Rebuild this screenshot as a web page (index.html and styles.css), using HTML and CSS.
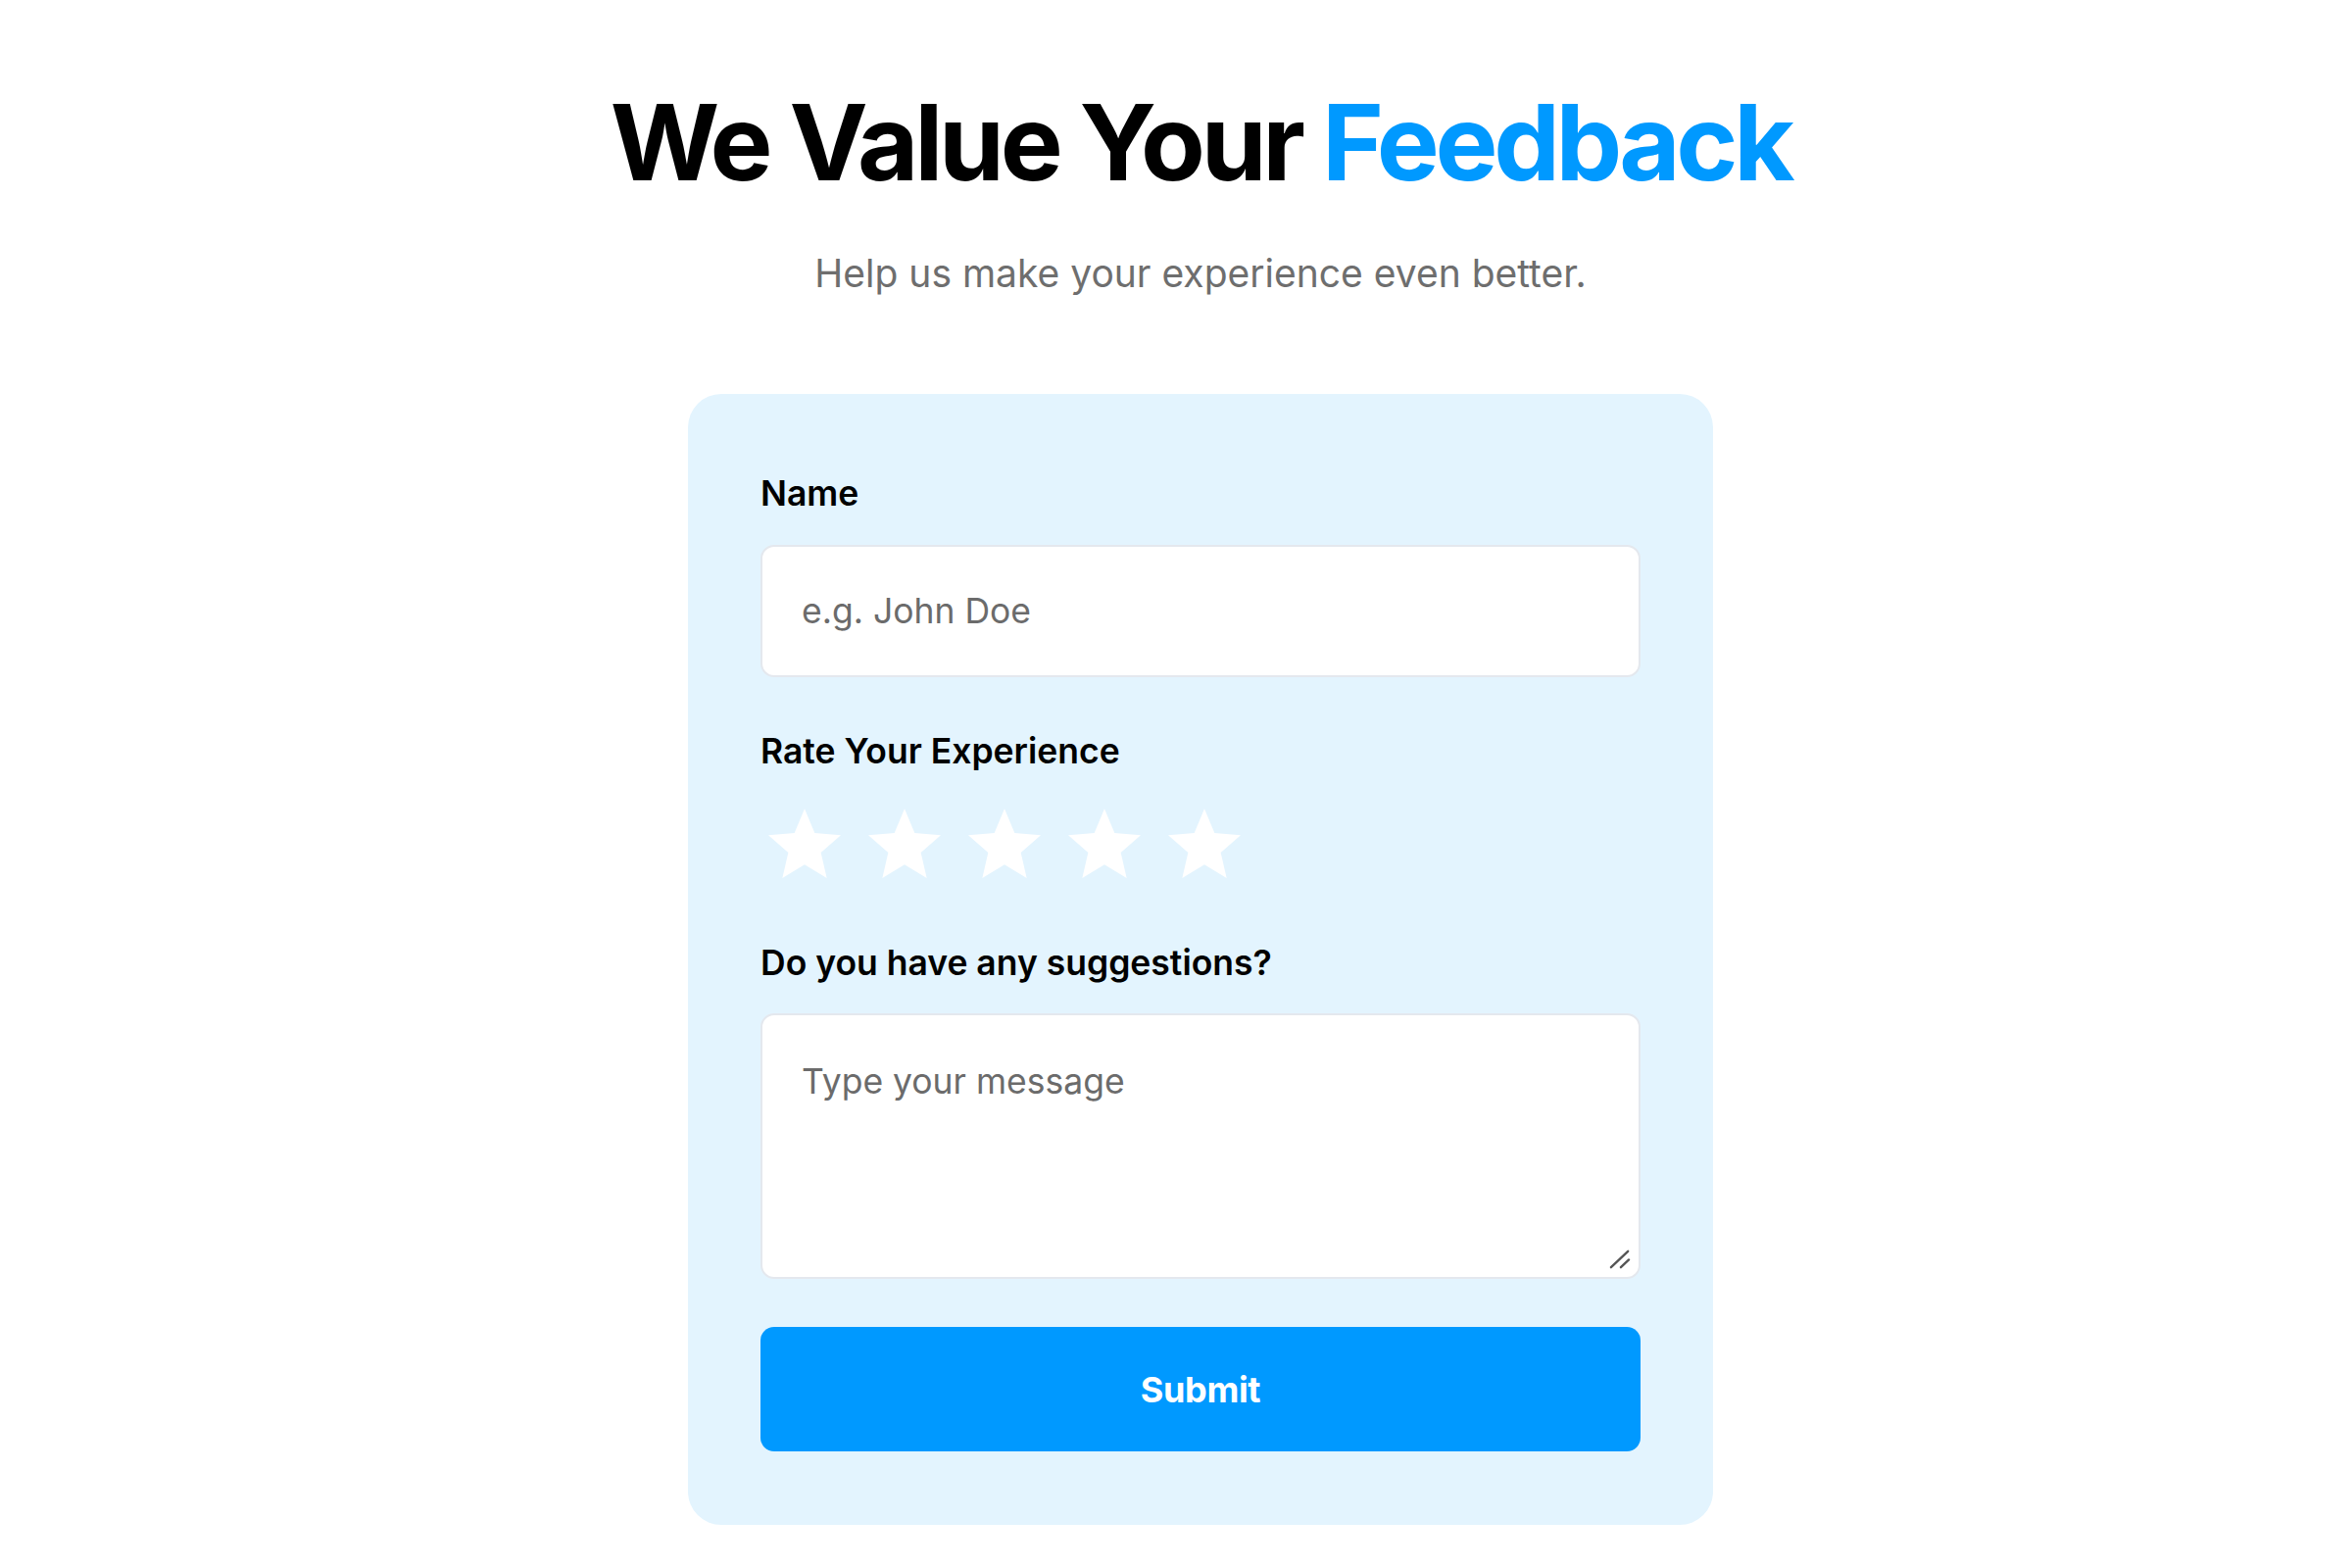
FILE: index.html
```html
<!DOCTYPE html>
<html lang="en">
<head>
<meta charset="utf-8">
<title>Feedback</title>
<link rel="stylesheet" href="styles.css">
</head>
<body>
<main class="page">
  <h1 class="title">We Value Your <span class="accent">Feedback</span></h1>
  <p class="subtitle">Help us make your experience even better.</p>
  <form class="card">
    <label class="label name-label" for="name">Name</label>
    <input class="field" id="name" type="text" placeholder="e.g. John Doe">
    <div class="label rate-label">Rate Your Experience</div>
    <div class="stars">
      <svg class="star" viewBox="0 0 24 24"><path d="M12 1.6l3.1 7.4 8 .7-6.1 5.3 1.8 7.8L12 18.7l-6.8 4.1 1.8-7.8L.9 9.7l8-.7z"/></svg>
      <svg class="star" viewBox="0 0 24 24"><path d="M12 1.6l3.1 7.4 8 .7-6.1 5.3 1.8 7.8L12 18.7l-6.8 4.1 1.8-7.8L.9 9.7l8-.7z"/></svg>
      <svg class="star" viewBox="0 0 24 24"><path d="M12 1.6l3.1 7.4 8 .7-6.1 5.3 1.8 7.8L12 18.7l-6.8 4.1 1.8-7.8L.9 9.7l8-.7z"/></svg>
      <svg class="star" viewBox="0 0 24 24"><path d="M12 1.6l3.1 7.4 8 .7-6.1 5.3 1.8 7.8L12 18.7l-6.8 4.1 1.8-7.8L.9 9.7l8-.7z"/></svg>
      <svg class="star" viewBox="0 0 24 24"><path d="M12 1.6l3.1 7.4 8 .7-6.1 5.3 1.8 7.8L12 18.7l-6.8 4.1 1.8-7.8L.9 9.7l8-.7z"/></svg>
    </div>
    <label class="label sugg-label" for="msg">Do you have any suggestions?</label>
    <div class="area-wrap">
      <textarea class="field area" id="msg" placeholder="Type your message"></textarea>
      <svg class="grip" viewBox="0 0 24 22"><path d="M2 20L21 2M13 20L22 11.5"/></svg>
    </div>
    <button class="submit" type="button">Submit</button>
  </form>
</main>
</body>
</html>
```

FILE: styles.css
```css
html, body {
  margin: 0;
  padding: 0;
  background: #ffffff;
}

body {
  font-family: Inter, "Noto Sans", sans-serif;
  color: #000;
}

.page {
  display: flex;
  flex-direction: column;
  align-items: center;
  padding: 92px 0 0 50px;
}

.title {
  margin: 0;
  font-size: 107.5px;
  line-height: 1;
  font-weight: 700;
  letter-spacing: -0.04em;
  color: #000;
}

.accent {
  color: #0099ff;
}

.subtitle {
  margin: 56px 0 0;
  font-size: 39px;
  line-height: 1.2;
  color: #6e6e6e;
}

.card {
  margin-top: 100px;
  width: 1046px;
  box-sizing: border-box;
  padding: 80px 74px 75px;
  background: #e3f4fe;
  border-radius: 34px;
  display: flex;
  flex-direction: column;
}

.label {
  font-size: 35.5px;
  font-weight: 600;
  line-height: 1.2;
  color: #000;
}

.name-label {
  margin-top: 1px;
}

.field {
  margin-top: 30px;
  box-sizing: border-box;
  width: 100%;
  height: 135px;
  padding: 0 40px;
  border: 2px solid #e4e8ee;
  border-radius: 14px;
  background: #fff;
  font-family: Inter, "Noto Sans", sans-serif;
  font-size: 35.5px;
  color: #222;
  outline: none;
}

.field::placeholder {
  color: #6b6b6b;
}

.rate-label {
  margin-top: 55px;
}

.stars {
  display: flex;
  gap: 22px;
  margin-top: 32px;
  margin-left: 5px;
}

.star {
  width: 80px;
  height: 80px;
  fill: #ffffff;
}

.sugg-label {
  margin-top: 62px;
}

.area-wrap {
  position: relative;
  margin-top: 29px;
}

.area {
  display: block;
  margin-top: 0;
  height: 271px;
  padding: 46px 40px;
  resize: none;
}

.grip {
  position: absolute;
  right: 10px;
  bottom: 10px;
  width: 22px;
  height: 20px;
  fill: none;
  stroke: #555;
  stroke-width: 2.6;
  stroke-linecap: round;
}

.submit {
  margin-top: 49px;
  height: 127px;
  border: none;
  border-radius: 14px;
  background: #0099ff;
  color: #fff;
  font-family: Inter, "Noto Sans", sans-serif;
  font-size: 36px;
  font-weight: 700;
  letter-spacing: -0.01em;
  cursor: pointer;
}
```
